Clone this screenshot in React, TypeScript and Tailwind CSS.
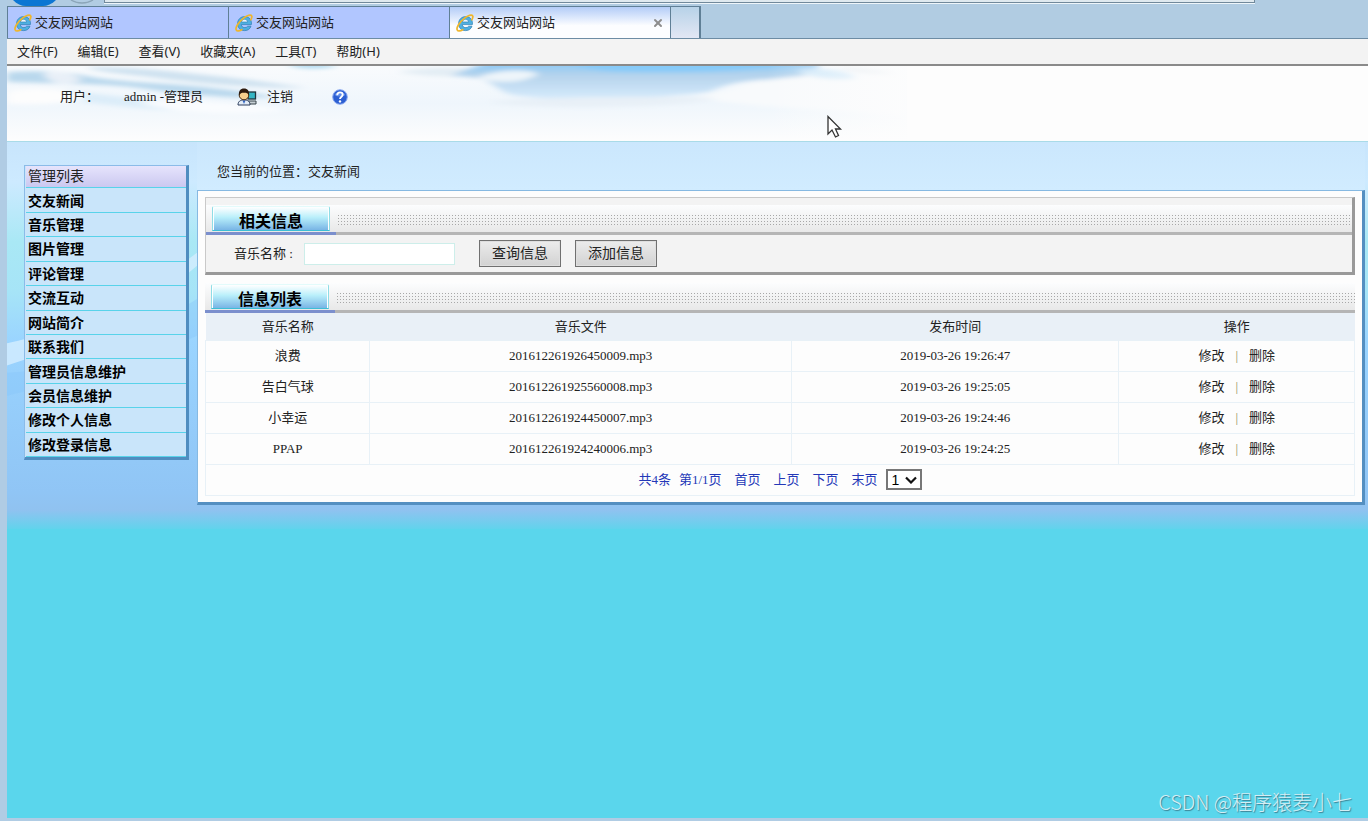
import type { ReactNode } from "react";
import { X } from "lucide-react";

const menus = ["文件(F)", "编辑(E)", "查看(V)", "收藏夹(A)", "工具(T)", "帮助(H)"];

const sections = [
    "交友新闻",
    "音乐管理",
    "图片管理",
    "评论管理",
    "交流互动",
    "网站简介",
    "联系我们",
    "管理员信息维护",
    "会员信息维护",
    "修改个人信息",
    "修改登录信息",
];

const songs = [
    { name: "浪费", file: "201612261926450009.mp3", time: "2019-03-26 19:26:47" },
    { name: "告白气球", file: "201612261925560008.mp3", time: "2019-03-26 19:25:05" },
    { name: "小幸运", file: "201612261924450007.mp3", time: "2019-03-26 19:24:46" },
    { name: "PPAP", file: "201612261924240006.mp3", time: "2019-03-26 19:24:25" },
];

function IeIcon() {
    return (
        <svg viewBox="0 0 18 18" className="w-[18px] h-[18px] shrink-0" aria-hidden="true">
            <path d="M16.400 10.600H6.300c.2 2 1.600 3 3.500 3 1.400 0 2.300-.5 2.800-1.400h3.400c-1 2.900-3.200 4.400-6.300 4.400-4.200 0-7.100-2.800-7.100-6.900 0-4.200 3-7.100 7.100-7.100 4.300 0 7.300 3.200 6.700 8z" fill="#4fb0e0" stroke="#2a7db3" strokeWidth=".7" />
            <path d="M6.400 8h6.200c-.2-1.700-1.300-2.700-3-2.700-1.700 0-2.900 1-3.200 2.700z" fill="#eaf5ff" stroke="#2a7db3" strokeWidth=".6" />
            <path d="M15.800 5.800C17.400 3 17.200 1.200 15.200 1.100 13.500 1 11 2.200 8 4.600 3 8.600.2 13.800 1.200 15.900c.8 1.700 3 1.200 5.600-.2" fill="none" stroke="#efb62c" strokeWidth="1.700" strokeLinecap="round" />
        </svg>
    );
}

function UserIcon() {
    return (
        <svg viewBox="0 0 20 18" className="w-5 h-[18px]" aria-hidden="true">
            <rect x="11" y="4" width="7.500" height="7" fill="#35b5c4" stroke="#20343c" strokeWidth="1.300" />
            <path d="M11 13h8v3h-9z" fill="#c5ced4" stroke="#39444a" />
            <path d="M1 17c0-3.500 2-5 6-5s6 1.500 6 5z" fill="#e3ecf7" stroke="#2c3c5c" />
            <path d="M5.500 12.500 7 16l1.500-3.500z" fill="#3669c5" />
            <circle cx="7" cy="7" r="4.800" fill="#f6cf8c" stroke="#4a2c10" />
            <path d="M2 7.500C1.500 2.800 3.400.6 7 .6s5.500 2.200 5 6.900C10.800 4.600 8.500 4.600 7 4.700 5 4.600 3.300 5 2 7.500z" fill="#2c1a0d" />
        </svg>
    );
}

function HelpIcon() {
    return (
        <svg viewBox="0 0 16 16" className="w-4 h-4" aria-hidden="true">
            <circle cx="8" cy="8" r="7.300" fill="#2c5fd2" stroke="#8caaf0" />
            <path d="M2.600 6C4 2 12 2 13.400 6 10 8 6 8 2.600 6z" fill="#5f8cea" />
            <path d="M5.200 6.200C5.300 4.300 6.500 3.400 8 3.400c1.600 0 2.700.9 2.700 2.400C10.700 7.700 8.100 7.700 8 10" fill="none" stroke="#fff" strokeWidth="1.900" />
            <circle cx="8" cy="12.400" r="1.200" fill="#fff" />
        </svg>
    );
}

function Sky() {
    return (
        <svg viewBox="0 0 900 75" className="absolute left-0 top-0 w-[900px] h-[75px]" aria-hidden="true">
            <defs>
                <filter id="soft" x="-20%" y="-50%" width="140%" height="200%">
                    <feGaussianBlur stdDeviation="4 2" />
                </filter>
                <linearGradient id="haze" x1="0" y1="0" x2="0" y2="1">
                    <stop offset="0" stopColor="#f9fbfd" />
                    <stop offset=".5" stopColor="#eff6fc" />
                    <stop offset="1" stopColor="#fdfdfd" />
                </linearGradient>
                <linearGradient id="edge" x1="0" y1="0" x2="1" y2="0">
                    <stop offset="0" stopColor="#fdfdfd" stopOpacity="0" />
                    <stop offset="1" stopColor="#fdfdfd" stopOpacity=".8" />
                </linearGradient>
                <linearGradient id="blue" x1="0" y1="0" x2="0" y2="1">
                    <stop offset="0" stopColor="#86c8f8" />
                    <stop offset=".35" stopColor="#b5d3ec" />
                    <stop offset="1" stopColor="#d6ebfc" />
                </linearGradient>
            </defs>
            <rect width="900" height="75" fill="url(#haze)" />
            <g filter="url(#soft)">
                <path d="M0 6c30-2 60 0 80 4s50 6 80 8 70 6 110 13c-40 2-90-2-130-8S50 18 0 16z" fill="#b9d8ed" />
                <path d="M80 1c50 0 80 4 120 8s70 9 100 13c-60 0-110-5-150-10S90 6 80 1z" fill="#cfe2f0" />
                <path d="M60 24c50 8 120 12 170 19-60 4-120-2-170-10z" fill="#dcedf9" />
                <path d="M0 26c20-6 50-4 72 2s-30 12-72 10z" fill="#fdfdfd" />
                <path d="M36 8c14-5 26-2 40 6-16 6-34 4-40-6z" fill="#e9f0f8" />
                <path d="M130 36c60-4 110 2 150 8-50 6-110 4-150-8z" fill="#fafcfe" />
                <path d="M280-2c15-3 40-2 50 2-14 3-38 4-50-2z" fill="#aed9f0" />
                <path d="M390 6c30-5 60-6 90-2-20 8-50 8-90 2z" fill="#e3edf4" />
                <path d="M480-4h330c6 9-5 15-40 17-40 2-50 5-68 13-70 9-170 9-200 2-20-8-14-18-60-18z" fill="url(#blue)" />
                <path d="M560-4h230c-30 8-80 10-130 10s-80 0-100-10z" fill="#85caf9" />
                <path d="M470 12c14-8 50-10 62-4-12 6-30 12-62 4z" fill="#eef5fa" />
                <path d="M748 16c50-10 90-4 152-10v44c-70-6-170-8-210-20 26-4 40-8 58-14z" fill="#f8fafc" />
                <path d="M480 36c60-6 180-6 230-4-30 10-180 12-230 4z" fill="#e8f0f7" />
                <path d="M790 4c25-3 50 0 60 8-20 3-50 0-60-8z" fill="#cfe8f9" />
                <path d="M830 1c20 0 40 3 60 6-20 2-45 0-60-6z" fill="#e2e9ee" />
            </g>
            <rect x="760" width="140" height="75" fill="url(#edge)" />
        </svg>
    );
}

function Scenery() {
    return (
        <svg viewBox="0 0 190 390" preserveAspectRatio="none" className="absolute left-0 top-0 w-[190px] h-[360px]" aria-hidden="true">
            <path d="M0 218C60 205 130 170 190 120v14C130 190 60 222 0 242z" fill="#d4edff" opacity=".8" />
            <path d="M0 250c80-5 130-40 190-80v40C130 240 60 260 0 275z" fill="#86c6fb" opacity=".4" />
        </svg>
    );
}

function BrowserTab({ active = false }: { active?: boolean }) {
    return (
        <button
            className={
                active
                    ? "flex w-[221px] items-center gap-[3px] border-r border-[#5f7f96] bg-gradient-to-b from-[#b3ccf7] to-[#fcfdff] to-60% px-[6px]"
                    : "flex w-[221px] items-center gap-[3px] border-r border-[#5f7f96] bg-[#b1c6ff] px-[6px]"
            }
        >
            <IeIcon />
            <span className="flex-1 text-left">交友网站网站</span>
            {active && <X className="h-3 w-3 text-[#8d8d8d]" strokeWidth={4} />}
        </button>
    );
}

function Heading({ children }: { children: ReactNode }) {
    return (
        <div className="flex h-[30px] bg-gradient-to-b from-[#fcfdfe] to-[#e6e6e6]">
            <div className="flex w-[130px] shrink-0 border-b-[3px] border-[#7b8fcd] pl-[6px]">
                <h2 className="mt-px h-[25px] w-[118px] rounded-t-xs border border-t-[#e3fbfb] border-x-[#8fdde6] border-b-[#3dbfd6] bg-gradient-to-b from-white via-[#b9effa] via-45% to-[#79b5e5] text-center text-base leading-[29px] font-bold text-black shadow-[inset_1px_0_0_#fff,inset_-1px_0_0_#fff]">
                    {children}
                </h2>
            </div>
            <div className="flex-1 border-b-[3px] border-[#b5b5b5] pt-[10px] pl-[2px]">
                {/* one dot per 3px tile */}
                <div className="h-3 bg-[conic-gradient(at_1px_1px,transparent_75%,#a8a8a8_0)] bg-size-[3px_3px]" />
            </div>
        </div>
    );
}

const cell = "border border-[#e8f1f7] p-0 align-middle";
const button = "h-[27px] border border-[#707070] bg-gradient-to-b from-[#ececec] to-[#d2d2d2] px-3 text-sm shadow-[inset_0_0_0_1px_#dedede]";

export default function App() {
    return (
        <div className="flex min-h-screen flex-col border-b-[3px] border-l-[7px] border-[#b0cce4] bg-[#5ad6ec] font-['Liberation_Serif','Noto_Sans_CJK_SC',serif] text-[13px] text-[#222]">
            {/* Browser chrome */}
            <div className="bg-[#b1cce2] font-['Noto_Sans','Noto_Sans_CJK_SC',sans-serif]">
                <div className="flex h-[6px] items-start">
                    <svg viewBox="0 0 97 6" className="h-[6px] w-[97px]" aria-hidden="true">
                        <path d="M6 0h43c-4 4-9 6-13 6H19C14 6 10 4 6 0z" fill="#0c76d3" />
                        <path d="M64 0c6 4 16 4 22 0" fill="none" stroke="#8ba5b8" strokeWidth="1.500" />
                    </svg>
                    <div className="mr-[113px] h-[3px] flex-1 border border-t-0 border-[#71899b] bg-[#dfe9ef] shadow-[0_1px_0_#eef5fa]" />
                </div>
                <div className="flex h-[33px] border-b border-[#6d8ca4]">
                    <div className="flex border-t border-l border-[#5f7f96]">
                        <BrowserTab />
                        <BrowserTab />
                        <BrowserTab active />
                        <button aria-label="新标签页" className="w-[30px] border-r-2 border-[#5f7f96] bg-gradient-to-b from-[#b7d2e8] to-[#e2e7f4]" />
                    </div>
                </div>
                <nav className="flex h-[27px] items-center gap-5 border-b-2 border-[#8a8a8a] bg-[#f3f3f3] pl-[10px]">
                    {menus.map((menu) => (
                        <button key={menu}>{menu}</button>
                    ))}
                </nav>
            </div>

            {/* Site header */}
            <header className="relative h-[76px] border-b border-[#a9dbe8] bg-[#fdfdfd]">
                <Sky />
                <div className="relative flex h-[62px] items-center pl-[53px]">
                    <span className="w-[64px]">用户：</span>
                    <span className="w-[113px]">admin -管理员</span>
                    <a href="#logout" className="flex w-[95px] items-center gap-[10px]">
                        <UserIcon />
                        注销
                    </a>
                    <a href="#help" aria-label="帮助">
                        <HelpIcon />
                    </a>
                </div>
                <svg viewBox="0 0 16 24" className="absolute top-[49px] left-[820px] h-6 w-4" aria-hidden="true">
                    <path d="M1 1.500v17.500l4-4 3.500 7 3-1.500L8.500 14H13.500z" fill="#fff" stroke="#333" strokeWidth="1.300" />
                </svg>
            </header>

            <div className="relative flex bg-[linear-gradient(#c8e5fc_0,#cdeaff_40px,#a9e8f5_100px,#a6e4f7_150px,#9ad4ff_200px,#90c5f5_350px,#90c2f0_368px,#5ad6ec_390px)] pb-[24px]">
                <Scenery />
                <aside className="relative w-[190px] shrink-0 pt-[23px] pl-[17px]">
                    <ul className="flex h-[295px] w-[165px] flex-col border-t border-r-[3px] border-b-[3px] border-l border-t-[#8bbbe8] border-r-[#4f8dc0] border-b-[#4f8dc0] border-l-[#8bbbe8] bg-[#c9e5fa] pl-px text-sm">
                        <li className="flex flex-1 items-center border-b border-[#58d3ea] bg-gradient-to-b from-[#e6e4fc] to-[#cbc8f0] pt-px pl-[2px]">管理列表</li>
                        {sections.map((section) => (
                            <li key={section} className="flex flex-1 items-center border-b border-[#58d3ea] pt-[3px] pl-[2px] font-bold text-black">
                                <a href="#section">{section}</a>
                            </li>
                        ))}
                    </ul>
                </aside>

                <main className="relative min-w-0 flex-1 pr-[3px]">
                    <div className="bg-gradient-to-b from-[#cbe7fd] to-[#d1ecff] pt-5 pb-2 pl-5 leading-5">
                        您当前的位置：交友新闻
                    </div>
                    <div className="border-t border-r-[3px] border-b-[3px] border-l border-t-[#86b9e2] border-r-[#548fc1] border-b-[#548fc1] border-l-[#86b9e2] bg-[#fdfdfd] px-[7px] py-[6px]">
                        <section className="border-t border-r-[3px] border-b-[3px] border-l border-t-[#c9c9c9] border-r-[#999] border-b-[#999] border-l-[#c9c9c9] bg-[#f3f3f3] pt-[7px]">
                            <Heading>相关信息</Heading>
                            <form className="flex h-[37px] items-center" onSubmit={(e) => e.preventDefault()}>
                                <label htmlFor="music" className="w-[98px] pl-7">音乐名称 :</label>
                                <input id="music" type="text" className="mr-6 h-[22px] w-[151px] border border-[#cdeeea] bg-white px-1" />
                                <button className={button}>查询信息</button>
                                <button className={`${button} ml-[14px]`}>添加信息</button>
                            </form>
                        </section>

                        <section className="pt-[8px]">
                            <Heading>信息列表</Heading>
                            <table className="w-full table-fixed border-collapse text-center">
                                <thead>
                                    <tr className="h-[27px] bg-[#e9f0f7]">
                                        <th className="w-[14.3%] font-normal">音乐名称</th>
                                        <th className="w-[36.7%] font-normal">音乐文件</th>
                                        <th className="w-[28.5%] font-normal">发布时间</th>
                                        <th className="font-normal">操作</th>
                                    </tr>
                                </thead>
                                <tbody>
                                    {songs.map((song) => (
                                        <tr key={song.file} className="h-[31px]">
                                            <td className={cell}>{song.name}</td>
                                            <td className={cell}>{song.file}</td>
                                            <td className={cell}>{song.time}</td>
                                            <td className={cell}>
                                                <div className="flex justify-center gap-[11px]">
                                                    <a href="#edit">修改</a>
                                                    <span className="text-[#8d8a5a]">|</span>
                                                    <a href="#delete">删除</a>
                                                </div>
                                            </td>
                                        </tr>
                                    ))}
                                    <tr className="h-[31px]">
                                        <td colSpan={4} className={cell}>
                                            <div className="flex items-center justify-center text-[#2438b8]">
                                                <span className="mr-2">共4条</span>
                                                <span className="mr-[13px]">第1/1页</span>
                                                <a href="#first" className="mr-[13px]">首页</a>
                                                <a href="#prev" className="mr-[13px]">上页</a>
                                                <a href="#next" className="mr-[13px]">下页</a>
                                                <a href="#last" className="mr-2">末页</a>
                                                <div className="relative">
                                                    <select aria-label="页码" className="block h-[21px] w-9 appearance-none border-2 border-[#777] bg-white pl-1 font-['Liberation_Sans',sans-serif] text-sm leading-4 text-black">
                                                        <option>1</option>
                                                    </select>
                                                    <svg viewBox="0 0 12 8" className="pointer-events-none absolute top-[7px] right-[5px] h-2 w-3" aria-hidden="true">
                                                        <path d="M1 1.500 6 6.500l5-5" fill="none" stroke="#111" strokeWidth="2.200" />
                                                    </svg>
                                                </div>
                                            </div>
                                        </td>
                                    </tr>
                                </tbody>
                            </table>
                        </section>
                    </div>
                </main>
            </div>

            <div className="mt-auto self-end pr-4 pb-[3px] font-['Noto_Sans_CJK_SC',sans-serif] text-xl leading-[26px] font-light text-[#d5eef4] [text-shadow:1px_1px_1px_#3c7f90]">
                CSDN @程序猿麦小七
            </div>
        </div>
    );
}
